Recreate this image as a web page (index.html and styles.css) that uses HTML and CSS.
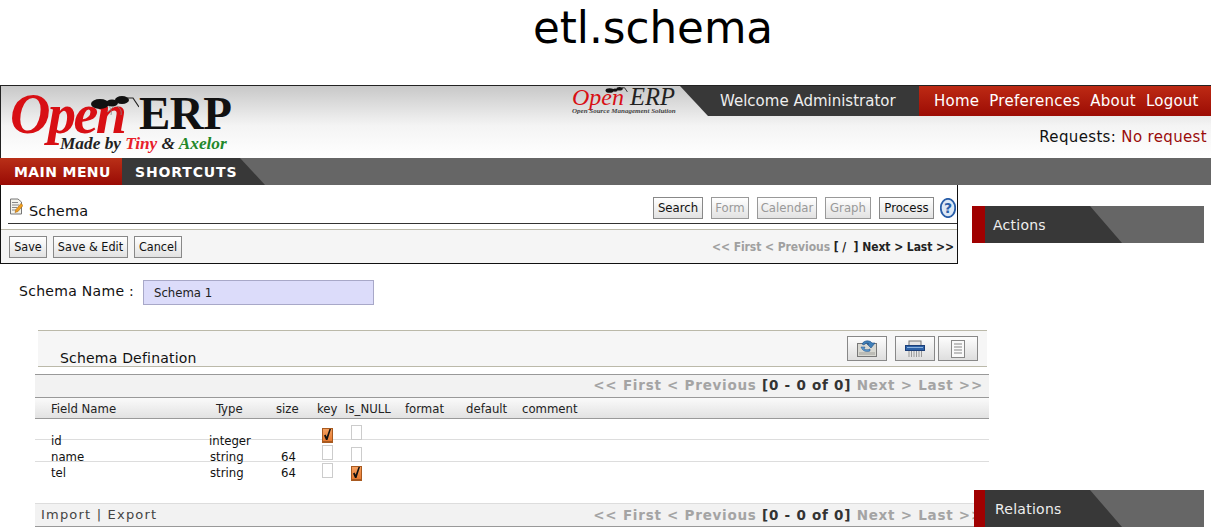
FILE: index.html
```html
<!DOCTYPE html>
<html lang="en">
<head>
<meta charset="utf-8">
<title>etl.schema</title>
<link rel="stylesheet" href="styles.css">
</head>
<body>
<div class="page">
  <h1 class="title">etl.schema</h1>
  <header class="app-header">
    <div class="brand-row">
      <div class="logo">
        <span class="logo-open">Open</span>
        <svg class="logo-ant" viewBox="0 0 50 22" aria-hidden="true"><ellipse cx="11" cy="10" rx="9" ry="5" fill="#111"/><ellipse cx="23" cy="9" rx="6" ry="3.5" fill="#111"/><ellipse cx="33" cy="6" rx="7" ry="4" fill="#111"/><path d="M38 4L44 4 50 13" fill="none" stroke="#222" stroke-width="1.2"/><path d="M20 12C22 15 23 18 22 21M28 12C31 14 33 17 32 21M25 12C22 15 20 17 18 18" fill="none" stroke="#888" stroke-width=".8"/></svg>
        <span class="logo-erp">ERP</span>
        <span class="logo-tag">Made by <span class="tag-red">Tiny</span> &amp; <span class="tag-green">Axelor</span></span>
      </div>
      <div class="header-right">
        <div class="top-strip">
          <div class="mini-logo">
            <span class="mini-open">Open</span>
            <svg class="mini-ant" viewBox="0 0 50 22" aria-hidden="true"><ellipse cx="11" cy="10" rx="9" ry="5" fill="#111"/><ellipse cx="23" cy="9" rx="6" ry="3.5" fill="#111"/><ellipse cx="33" cy="6" rx="7" ry="4" fill="#111"/><path d="M38 4L44 4 50 13" fill="none" stroke="#222" stroke-width="2"/></svg>
            <span class="mini-erp">ERP</span>
            <span class="mini-sub">Open Source Management Solution</span>
          </div>
          <div class="welcome">Welcome Administrator</div>
          <nav class="top-links"><a>Home</a><a>Preferences</a><a>About</a><a>Logout</a></nav>
        </div>
        <div class="requests">Requests: <span class="no-request">No request</span></div>
      </div>
    </div>
    <nav class="menu-bar">
      <a class="menu-main">MAIN MENU</a>
      <a class="menu-short">SHORTCUTS</a>
    </nav>
  </header>

  <div class="workspace">
    <main class="main-col">
      <section class="toolbox">
        <div class="view-row">
          <div class="view-title">
            <svg class="doc-icon" viewBox="0 0 14 18" aria-hidden="true"><path d="M1.5 1.5H9L12.5 4.5V16.5H1.5Z" fill="#f4f4ee" stroke="#777"/><path d="M3 5H9M3 7.5H10M3 10H8M3 12.5H7" stroke="#888"/><path d="M6 15L7 12 12 6 14 8 9 14Z" fill="#f0a020" stroke="#a86410" stroke-width=".6"/></svg>
            <span>Schema</span>
          </div>
          <div class="view-actions">
            <button class="btn w-search">Search</button>
            <button class="btn off w-form">Form</button>
            <button class="btn off w-calendar">Calendar</button>
            <button class="btn off w-graph">Graph</button>
            <button class="btn w-process">Process</button>
            <svg class="help-icon" viewBox="0 0 16 20" aria-hidden="true"><ellipse cx="8" cy="10" rx="7.2" ry="9.2" fill="#dce8f6" stroke="#2a5ea8" stroke-width="1.8"/><text x="8" y="15" text-anchor="middle" class="help-q">?</text></svg>
          </div>
        </div>
        <div class="action-row">
          <div class="save-group">
            <button class="btn w-save">Save</button>
            <button class="btn w-saveedit">Save &amp; Edit</button>
            <button class="btn w-cancel">Cancel</button>
          </div>
          <div class="rec-pager"><span class="muted">&lt;&lt; First &lt; Previous</span> [ / &nbsp;] Next &gt; Last &gt;&gt;</div>
        </div>
      </section>

      <section class="form-area">
        <div class="name-row">
          <label class="name-label">Schema Name :</label>
          <div class="name-input">Schema 1</div>
        </div>

        <div class="panel">
          <div class="panel-head">
            <span class="panel-title">Schema Defination</span>
            <div class="panel-tools">
              <button class="tool">
                <svg viewBox="0 0 22 18" aria-hidden="true"><rect x="1.5" y="3.5" width="19" height="13" fill="#d8d8d2" stroke="#777"/><rect x="3" y="12" width="16" height="3" fill="#bcbcb6"/><path d="M6 4C8 0 14 0 16 3L19 3 15 8 11 4 13 4C12 3 9 3 8 5Z" fill="#3f7fb8" stroke="#1f4f88" stroke-width=".6"/><path d="M5 7L9 7 8 9C10 10 12 10 14 9L14 11C11 12 7 12 5 7Z" fill="#5a9ad0" stroke="#1f4f88" stroke-width=".5"/></svg>
              </button>
              <button class="tool tool-gap">
                <svg viewBox="0 0 22 18" aria-hidden="true"><rect x="5" y="1" width="12" height="5" fill="#e6e6e6" stroke="#777"/><rect x="1.5" y="5.5" width="19" height="5" fill="#2d62a8" stroke="#1c3f78"/><rect x="3" y="7" width="16" height="1" fill="#8db4e0"/><path d="M5 11V17M7.5 11V17M10 11V17M12.5 11V17M15 11V17M17.5 11V17" stroke="#999"/></svg>
              </button>
              <button class="tool tool-near">
                <svg viewBox="0 0 22 18" aria-hidden="true"><rect x="4.5" y=".5" width="13" height="17" fill="#fafafa" stroke="#888"/><path d="M7 4H15M7 7H15M7 10H15M7 13H15" stroke="#888"/></svg>
              </button>
            </div>
          </div>
          <div class="pager-row">
            <span class="muted-wide">&lt;&lt; First &lt; Previous</span> <b>[0 - 0 of 0]</b> <span class="muted-wide">Next &gt; Last &gt;&gt;</span>
          </div>
          <div class="grid-head">
            <span>Field Name</span><span>Type</span><span>size</span><span>key</span><span>Is_NULL</span><span>format</span><span>default</span><span>comment</span>
          </div>
          <div class="grid-body">
            <div class="grid-row">
              <span>id</span><span>integer</span><span></span>
              <span class="box on lift-4"></span><span class="box lift-7"></span>
            </div>
            <div class="grid-row">
              <span>name</span><span class="str">string</span><span>64</span>
              <span class="box lift-3"></span><span class="box lift-1"></span>
            </div>
            <div class="grid-row">
              <span>tel</span><span class="str">string</span><span>64</span>
              <span class="box lift-1"></span><span class="box on drop-2"></span>
            </div>
          </div>
          <div class="panel-foot">
            <span class="foot-links">Import | Export</span>
            <div class="foot-pager"><span class="muted-wide">&lt;&lt; First &lt; Previous</span> <b>[0 - 0 of 0]</b> <span class="muted-wide">Next &gt; Last &gt;&gt;</span></div>
          </div>
        </div>
      </section>
    </main>

    <aside class="side-col">
      <div class="side-tab"><span class="side-label">Actions</span></div>
      <div class="side-tab side-relations"><span class="side-label">Relations</span></div>
    </aside>
  </div>
</div>
</body>
</html>
```

FILE: styles.css
```css
* { box-sizing: border-box; }
html, body { margin: 0; padding: 0; background: #fff; overflow: hidden; }
body { font-family: "DejaVu Sans", sans-serif; color: #111; }
.page { width: 1211px; height: 531px; }

.title {
  margin: 0; height: 85px; padding: 0 0 0 95px;
  text-align: center; font-size: 43.6px; font-weight: 400; line-height: 56px; color: #000;
}

.app-header { border-top: 1px solid #222; border-left: 1px solid #222; }
.brand-row {
  display: flex; justify-content: space-between; height: 72px;
  background: linear-gradient(#c8c8c8, #f4f4f4 55%, #fff);
}

.logo { position: relative; width: 240px; height: 72px; font-family: "Liberation Serif", serif; }
.logo-open { position: absolute; left: 9px; top: 11px; font-size: 56px; line-height: 34px; font-weight: 700; font-style: italic; color: #d80f14; letter-spacing: -2.5px; }
.logo-ant { position: absolute; left: 88px; top: 8px; width: 50px; height: 22px; }
.logo-erp { position: absolute; left: 138px; top: 10px; font-size: 47px; line-height: 34px; font-weight: 700; color: #111; letter-spacing: -.5px; }
.logo-tag { position: absolute; left: 59px; top: 50px; font-size: 17.3px; line-height: 16px; font-style: italic; font-weight: 700; color: #222; white-space: nowrap; }
.tag-red { color: #e8202a; }
.tag-green { color: #22882a; }

.header-right { display: flex; flex-direction: column; width: 640px; }
.top-strip { display: flex; height: 30px; }
.mini-logo { position: relative; width: 109px; font-family: "Liberation Serif", serif; font-style: italic; }
.mini-open { position: absolute; left: 1px; top: 1px; font-size: 24px; line-height: 20px; color: #d80f14; }
.mini-ant { position: absolute; left: 31px; top: 0; width: 28px; height: 10px; }
.mini-erp { position: absolute; left: 59px; top: 1px; font-size: 24.5px; line-height: 20px; color: #222; }
.mini-sub { position: absolute; left: 1px; top: 22px; font-size: 7px; line-height: 6px; font-weight: 700; color: #444; white-space: nowrap; }
.welcome {
  width: 239px; padding-left: 40px; background: #383838; color: #eee;
  font-size: 15px; line-height: 30px;
  clip-path: polygon(0 0, 100% 0, 100% 100%, 28px 100%);
}
.top-links {
  flex: 1; display: flex; gap: 10px; padding-left: 15px;
  background: linear-gradient(#bd2a14, #9c0c04); color: #fff;
  font-size: 15px; line-height: 30px; letter-spacing: .25px;
}
.requests { text-align: right; padding-right: 4px; margin-top: 11px; font-size: 15px; line-height: 20px; letter-spacing: .35px; color: #111; }
.no-request { color: #9a0b0b; }

.menu-bar { display: flex; height: 27px; background: #666; margin-left: -1px; font-size: 14px; font-weight: 700; line-height: 29px; color: #fff; }
.menu-main { width: 122px; padding-left: 14px; letter-spacing: .4px; background: linear-gradient(#b93018, #990a04); }
.menu-short { width: 143px; padding-left: 13px; letter-spacing: .85px; background: #383838; clip-path: polygon(0 0, 118px 0, 100% 100%, 0 100%); }

.workspace { display: flex; }
.main-col { width: 958px; flex: none; }

.toolbox { height: 79px; border: 1px solid #111; border-top: 0; background: #fff; }
.view-row { display: flex; justify-content: space-between; height: 39px; margin-left: 7px; border-bottom: 1px solid #333; }
.view-title { display: flex; align-items: flex-start; padding: 12px 0 0 1px; font-size: 14.5px; line-height: 28px; letter-spacing: .15px; }
.doc-icon { width: 14px; height: 19px; margin-right: 6px; }
.view-actions { display: flex; align-items: flex-start; padding-top: 12px; }
.help-icon { width: 16px; height: 20px; margin: 1px 1px 0 6px; }
.help-q { font: 700 14px "DejaVu Sans", sans-serif; fill: #2a5ea8; }

.btn {
  height: 22px; padding: 0; border: 1px solid #888; border-radius: 0;
  background: linear-gradient(#fff, #e2e2e2);
  font-family: "DejaVu Sans Condensed", "DejaVu Sans", sans-serif; font-stretch: condensed;
  font-size: 13px; line-height: 20px; color: #111; text-align: center;
}
.btn.off { color: #999; border-color: #999; }
.w-search { width: 50px; margin-right: 8px; }
.w-form { width: 38px; margin-right: 8px; }
.w-calendar { width: 60px; margin-right: 8px; }
.w-graph { width: 46px; margin-right: 8px; }
.w-process { width: 55px; }
.w-save { width: 38px; margin-right: 6px; }
.w-saveedit { width: 75px; margin-right: 6px; }
.w-cancel { width: 48px; }

.action-row {
  display: flex; justify-content: space-between; align-items: flex-start;
  height: 34px; margin-top: 5px; padding: 6px 3px 0 8px; border-top: 1px solid #bbb9a9; background: #f5f5f5;
}
.save-group { display: flex; }
.save-group .btn { font-size: 12.5px; }
.rec-pager { font-family: "DejaVu Sans Condensed", "DejaVu Sans", sans-serif; font-stretch: condensed; font-size: 12px; letter-spacing: -.06px; font-weight: 700; line-height: 23px; color: #222; }
.muted { color: #a0a0a0; }

.form-area { width: 990px; }
.name-row { display: flex; align-items: flex-start; padding: 16px 0 0 19px; height: 66px; }
.name-label { width: 124px; font-size: 14px; line-height: 22px; letter-spacing: .3px; }
.name-input { width: 231px; height: 25px; padding-left: 10px; border: 1px solid #a8a8c8; background: #dcdcfa; font-family: "DejaVu Sans Condensed", "DejaVu Sans", sans-serif; font-stretch: condensed; font-size: 13px; line-height: 24px; color: #222; }

.panel { width: 954px; margin-left: 35px; }
.panel-head {
  display: flex; justify-content: space-between; height: 37px; margin: 0 2px 0 3px;
  border-top: 1px solid #bbb9a9; border-bottom: 1px solid #bbb9a9; background: #f6f6f6;
}
.panel-title { padding: 17px 0 0 22px; font-size: 14px; line-height: 20px; letter-spacing: .2px; }
.panel-tools { display: flex; padding: 5px 9px 0 0; }
.tool { width: 40px; height: 25px; padding: 0; border: 1px solid #888; background: linear-gradient(#fdfdfd, #dedede); display: flex; align-items: center; justify-content: center; }
.tool svg { width: 22px; height: 18px; }
.tool-gap { margin-left: 8px; }
.tool-near { margin-left: 3px; }

.pager-row, .foot-pager { font-size: 13.5px; letter-spacing: .75px; font-weight: 700; }
.pager-row {
  height: 23px; margin-top: 7px; padding-right: 6px; text-align: right;
  line-height: 21px; border-top: 1px solid #999; background: #f2f2f2; color: #333;
}
.muted-wide { color: #a4a4a4; }

.grid-head {
  display: grid; grid-template-columns: 165px 60px 41px 28px 60px 61px 56px 1fr;
  height: 22px; padding-left: 16px; border-top: 1px solid #999; border-bottom: 1px solid #999;
  background: linear-gradient(#fafafa, #e2e2e2);
  font-family: "DejaVu Sans Condensed", "DejaVu Sans", sans-serif; font-stretch: condensed;
  font-size: 13px; line-height: 22px; color: #222;
}
.grid-body {
  height: 84px; padding: 13px 0 0 16px;
  background-image: linear-gradient(#ddd, #ddd), linear-gradient(#ddd, #ddd);
  background-size: 100% 1px; background-repeat: no-repeat;
  background-position: 0 20px, 0 42px;
}
.grid-row {
  display: grid; grid-template-columns: 158px 72px 41px 29px 11px; height: 16px;
  font-family: "DejaVu Sans Condensed", "DejaVu Sans", sans-serif; font-stretch: condensed;
  font-size: 13px; line-height: 18px; color: #111;
}
.str { padding-left: 1px; }
.box { display: block; width: 11px; height: 15px; border: 1px solid #ccc; background: #fff; }
.box.on {
  border: 1px solid #a85a20; border-bottom-width: 2px;
  background: linear-gradient(#f4a060, #e87a30);
  position: relative;
}
.box.on::after {
  content: ""; position: absolute; left: 1px; top: 0; width: 7px; height: 11px; background: #111;
  clip-path: polygon(0 58%, 22% 50%, 38% 70%, 78% 0, 100% 0, 50% 100%, 28% 100%);
}
.lift-7 { margin-top: -7px; }
.lift-4 { margin-top: -4px; }
.lift-3 { margin-top: -3px; }
.lift-1 { margin-top: -1px; }
.drop-2 { margin-top: 2px; }

.panel-foot {
  display: flex; justify-content: space-between; height: 24px; padding: 0 6px 0 6px;
  line-height: 22px; border-top: 1px solid #ddd; border-bottom: 1px solid #999; background: #f2f2f2; color: #333;
}
.foot-links { font-size: 13px; letter-spacing: 1.2px; color: #444; }

.side-col { position: relative; width: 232px; margin-left: 14px; padding-top: 21px; }
.side-tab {
  height: 37px; border-left: 13px solid #a00000; background: #666;
  display: flex;
}
.side-label {
  display: block; width: 137px; padding-left: 8px; background: #383838; color: #eee;
  font-size: 14px; line-height: 38px; letter-spacing: .25px;
  clip-path: polygon(0 0, 105px 0, 100% 100%, 0 100%);
}
.side-relations { margin: 247px 0 0 2px; border-left-width: 11px; }
.side-relations .side-label { padding-left: 10px; }
```
